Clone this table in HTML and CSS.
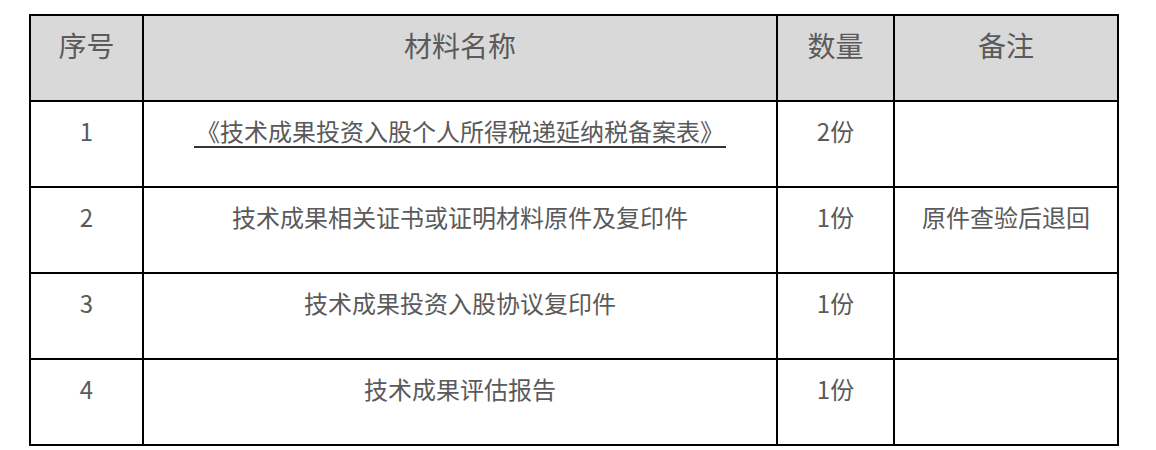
FILE: index.html
```html
<!DOCTYPE html>
<html lang="zh-CN">
<head>
<meta charset="utf-8">
<link rel="stylesheet" href="styles.css">
</head>
<body>
<table class="materials">
  <colgroup>
    <col class="c-no">
    <col class="c-name">
    <col class="c-qty">
    <col class="c-note">
  </colgroup>
  <thead>
    <tr><th>序号</th><th>材料名称</th><th>数量</th><th>备注</th></tr>
  </thead>
  <tbody>
    <tr><td>1</td><td><span class="link">《技术成果投资入股个人所得税递延纳税备案表》</span></td><td>2份</td><td></td></tr>
    <tr><td>2</td><td>技术成果相关证书或证明材料原件及复印件</td><td>1份</td><td>原件查验后退回</td></tr>
    <tr><td>3</td><td>技术成果投资入股协议复印件</td><td>1份</td><td></td></tr>
    <tr><td>4</td><td>技术成果评估报告</td><td>1份</td><td></td></tr>
  </tbody>
</table>
</body>
</html>
```
FILE: styles.css
```css
html, body {
  margin: 0;
  padding: 0;
  background: #ffffff;
}
body {
  padding: 14px 0 0 29px;
  font-family: "Noto Sans CJK SC", "Noto Sans", sans-serif;
  color: #5a5a5a;
}
.materials {
  border-collapse: collapse;
  table-layout: fixed;
  width: 1088px;
  border: 2px solid #000;
}
.c-no { width: 113px; }
.c-name { width: 634px; }
.c-qty { width: 117px; }
.c-note { width: 224px; }
.materials th,
.materials td {
  border: 2px solid #000;
  height: 86px;
  box-sizing: border-box;
  padding: 9px 4px 0;
  vertical-align: top;
  text-align: center;
  font-weight: normal;
}
.materials th {
  background: #d9d9d9;
  font-size: 28px;
  line-height: 40px;
}
.materials td {
  font-size: 24px;
  line-height: 40px;
}
.link {
  display: inline-block;
  line-height: 30px;
  border-bottom: 2px solid #333;
  padding: 0 2px;
}
```
